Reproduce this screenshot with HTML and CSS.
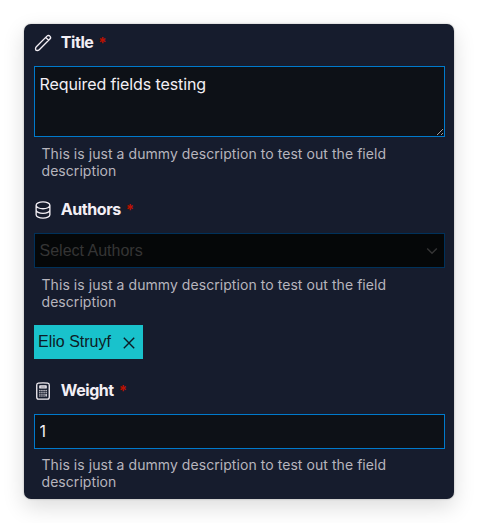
FILE: index.html
```
<!DOCTYPE html>
<html lang="en">
<head>
<meta charset="utf-8">
<title>Required fields</title>
<link rel="stylesheet" href="styles.css">
</head>
<body>
<form class="panel">
  <section class="field">
    <label class="label" for="title">
      <svg class="icon" viewBox="0 0 24 24"><path d="M15.232 5.232l3.536 3.536m-2.036-5.036a2.500 2.500 0 113.536 3.536L7.500 20.036Q6.500 21.036 5 21.036Q3 21.036 3 19.200Q3 17.464 4 16.464L16.732 3.732z"/></svg>
      <span class="name">Title</span><span class="required">*</span>
    </label>
    <textarea class="control area" id="title">Required fields testing</textarea>
    <p class="description">This is just a dummy description to test out the field description</p>
  </section>
  <section class="field authors">
    <div class="label">
      <svg class="icon" viewBox="0 0 24 24"><path d="M20.25 6.375c0 2.278-3.694 4.125-8.25 4.125S3.75 8.653 3.75 6.375m16.5 0c0-2.278-3.694-4.125-8.25-4.125S3.75 4.097 3.75 6.375m16.5 0v11.25c0 2.278-3.694 4.125-8.25 4.125s-8.25-1.847-8.25-4.125V6.375M20.250 12c0 2.278-3.694 4.125-8.250 4.125S3.750 14.278 3.750 12"/></svg>
      <span class="name">Authors</span><span class="required">*</span>
    </div>
    <button class="control select" type="button" disabled>
      <span>Select Authors</span>
      <svg class="chevron" viewBox="0 0 12 8"><path d="M1.2 1.4L6 6.2l4.800-4.800"/></svg>
    </button>
    <p class="description">This is just a dummy description to test out the field description</p>
    <button class="chip" type="button">
      <span>Elio Struyf</span>
      <svg class="close" viewBox="0 0 12 12"><path d="M.8.8l10.400 10.400M11.200.8L.8 11.200"/></svg>
    </button>
  </section>
  <section class="field weight">
    <label class="label" for="weight">
      <svg class="icon" viewBox="0 0 24 24"><path d="M15.750 15.750V18m-7.500-6.750h.008v.008H8.250v-.008zm0 2.250h.008v.008H8.250V13.500zm0 2.250h.008v.008H8.250v-.008zm0 2.250h.008v.008H8.250V18zm2.498-6.750h.007v.008h-.007v-.008zm0 2.250h.007v.008h-.007V13.500zm0 2.250h.007v.008h-.007v-.008zm0 2.250h.007v.008h-.007V18zm2.504-6.750h.008v.008h-.008v-.008zm0 2.250h.008v.008h-.008V13.500zm0 2.250h.008v.008h-.008v-.008zm0 2.250h.008v.008h-.008V18zm2.498-6.750h.008v.008h-.008v-.008zm0 2.250h.008v.008h-.008V13.500zM8.250 6h7.500v2.250h-7.500V6zM12 2.250c-1.892 0-3.758.110-5.593.322C5.307 2.700 4.500 3.650 4.500 4.757V19.500a2.250 2.250 0 002.250 2.250h10.500a2.250 2.250 0 002.250-2.250V4.757c0-1.108-.806-2.057-1.907-2.185A48.507 48.507 0 0012 2.250z"/></svg>
      <span class="name">Weight</span><span class="required">*</span>
    </label>
    <input class="control" id="weight" type="text" value="1">
    <p class="description">This is just a dummy description to test out the field description</p>
  </section>
</form>
</body>
</html>
```
FILE: styles.css
```
* { box-sizing: border-box; }

body {
  margin: 0;
  padding: 24px;
  background: #fff;
  font-family: Inter, "Liberation Sans", sans-serif;
}

.panel {
  width: 430px;
  height: 475px;
  padding: 8px 9px 0 10px;
  border-radius: 7px;
  background: #161c2d;
  box-shadow: 0 0 2px rgba(0, 0, 0, .3), 0 8px 22px rgba(0, 0, 0, .14);
}

.field {
  height: 167px;
  display: flex;
  flex-direction: column;
}

.authors { height: 181px; }
.weight { height: 119px; }

.label {
  display: flex;
  align-items: center;
  height: 21px;
  margin-bottom: 13px;
  color: #f3eff5;
  font-size: 16px;
  font-weight: 700;
  line-height: 21px;
}

.icon {
  width: 20px;
  height: 20px;
  margin: 1px 7.5px 0 -.7px;
  fill: none;
  stroke: currentColor;
  stroke-width: 1.6;
  stroke-linecap: round;
  stroke-linejoin: round;
}

.name { letter-spacing: -.45px; }

.required {
  margin-left: 5px;
  color: #be1100;
  font-weight: 700;
  font-size: 15px;
}

.control {
  display: block;
  width: 100%;
  height: 35px;
  flex-shrink: 0;
  margin: 0;
  padding: 0 4.5px 2px;
  border: 1px solid #007acc;
  border-radius: 0;
  outline: 0;
  background: #0d1117;
  color: #f3eff5;
  font: 16px/24px Inter, "Liberation Sans", sans-serif;
  letter-spacing: -.1px;
}

.area {
  height: 71px;
  padding: 5px 4.5px;
  resize: vertical;
}

.description {
  width: 380px;
  margin: 8px 0 0 7.5px;
  color: #b7b5bd;
  font-size: 14px;
  line-height: 17px;
  letter-spacing: .06px;
}

.weight .description { margin-top: 7px; }

.select {
  display: flex;
  align-items: center;
  justify-content: space-between;
  padding-bottom: 0;
  border-color: #00315a;
  background: #050708;
  color: #353535;
  font-family: "Liberation Sans", Arial, sans-serif;
  letter-spacing: 0;
}

.chevron {
  width: 12px;
  height: 8px;
  margin-right: 2px;
  fill: none;
  stroke: currentColor;
  stroke-width: 1.4;
}

.chip {
  display: flex;
  align-items: center;
  justify-content: space-between;
  width: 109px;
  height: 34px;
  margin-top: 15px;
  padding: 0 8px 1px 4px;
  border: 0;
  background: #19c2cc;
  color: #0d1b25;
  font: 16px/24px "Liberation Sans", Arial, sans-serif;
}

.close {
  width: 12px;
  height: 12px;
  margin-top: 2px;
  fill: none;
  stroke: currentColor;
  stroke-width: 1.4;
}
```
